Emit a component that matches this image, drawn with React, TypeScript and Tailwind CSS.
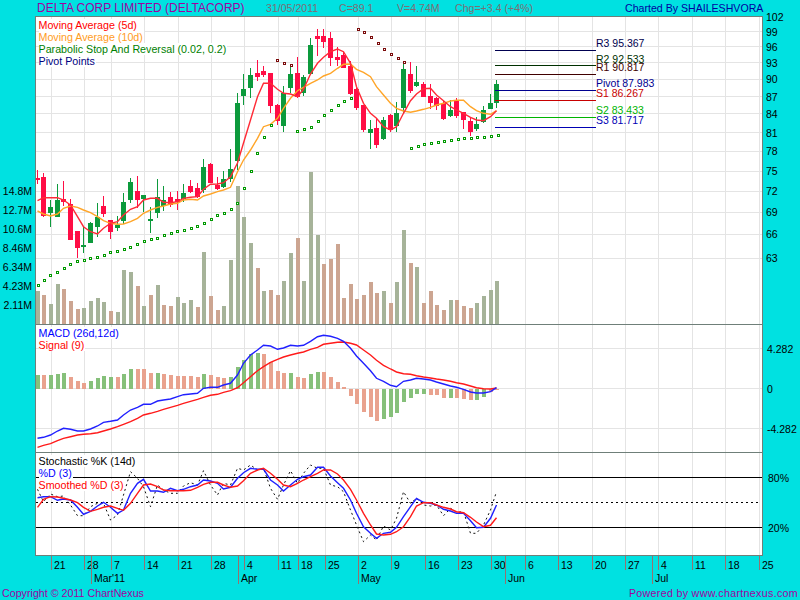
const ma5 = [200.7,197.7,197.7,197.7,200,205,216.7,226.7,231.7,234,228.3,223.3,221.7,215,209.3,206.7,200,198.3,198.3,202.3,202.7,201.7,198.3,197.3,196.7,189.3,184.3,184,182.7,176.7,163,143,120,96.7,83.3,83.3,89.3,93.3,94,96.7,89.3,74,63.3,57.3,51.7,49,51.7,63.3,86.7,103.3,113.3,118.3,126.7,130,126.7,113.3,100.7,94,88.7,88.3,95,100.7,106.7,110,113.3,117.3,120,120.7,116.7,110.7];
const ma10 = [211,214,216,214,208.3,206,207.3,210,212.7,216.7,220.7,223.3,224.3,224,221.7,218.3,213.3,210,207.3,206,204,203.3,200,199.3,200,196,194,191.7,190,187.3,171.7,160,150,138.3,126.7,124.3,118.3,108.3,98.3,90.7,87.3,83.3,80,76,73.3,68.3,64.3,64,69.3,72.3,76.7,86.7,95,103.3,108.3,111,112.3,111,109.3,107.3,105,103.3,101,100.3,100.3,106.7,110.7,113.3,114.3,110.7];

// wickTop, bodyTop, bodyBottom, wickBottom, colour
const candles: [number, number, number, number, string][] = [
  [170,178,180,184,"r"],[172.5,177,216,217,"r"],[200,207,213,227,"g"],[184,200,217,217,"g"],[181,199,202,206,"r"],
  [199,204,240,240,"r"],[231,231,248,258,"r"],[227,245,247,253,"g"],[222,223,243,243,"g"],[203,217,227,237,"g"],
  [196,206,214,217,"r"],[220,220,232,239,"r"],[216,225,228,231,"g"],[193,202,221,224,"g"],[178,182,200,203,"g"],
  [176,191,200,208,"r"],[195,195,199,212,"g"],[207,219,220,233,"g"],[179,197,213,218,"g"],[186,200,206,211,"g"],
  [192,197,205,207,"r"],[191,199,202,210,"r"],[184,193,199,202,"g"],[180,186,192,193,"r"],[183,188,197,198,"r"],
  [159,167,190,193,"g"],[163,164,183,183,"r"],[177,185,189,190,"r"],[171,179,187,188,"g"],[149,169,179,182,"g"],
  [93,103,161,170,"g"],[74,89,96,105,"g"],[68,75,88,98,"g"],[60,73,77,81,"r"],[66,71,75,77,"r"],
  [73,73,106,113,"r"],[104,105,121,125,"r"],[86,93,126,132,"g"],[65,74,88,93,"g"],[57,73,97,98,"r"],
  [75,77,93,96,"g"],[38,45,74,75,"g"],[29,36,39,56,"r"],[29,36,42,48,"r"],[32,38,58,66,"r"],
  [47,57,60,66,"r"],[52,55,68,68,"r"],[61,66,94,95,"r"],[88,89,108,110,"r"],[105,105,130,132,"r"],
  [120,129,133,149,"g"],[118,128,145,148,"r"],[117,120,139,140,"g"],[114,115,130,132,"r"],[102,113,126,132,"g"],
  [62,69,108,113,"g"],[62,74,91,93,"r"],[66,82,86,87,"g"],[82,84,97,97,"r"],[84,96,103,109,"r"],
  [97,98,106,110,"r"],[101,103,119,120,"r"],[100,110,116,117,"g"],[98,100,116,118,"r"],[112,112,120,129,"r"],
  [117,121,132,136,"r"],[117,124,129,131,"g"],[106,110,122,123,"g"],[94,103,109,109,"g"],[80,84,103,108,"g"],
];

const volumeTops = [363,375,402,342,357,393,417,414,393,384,396,423,426,300,306,348,408,375,345,405,408,381,399,390,411,246,378,420,408,270,48,141,219,294,363,360,375,333,249,204,333,6,195,282,267,222,384,342,387,375,336,369,363,399,336,180,279,291,399,363,405,420,390,390,408,414,399,378,360,333];
const volumeColors = "gpggpppggg" + "gpgggpgpgp" + "pgggpgppgg" + "gggpgppggp" + "gggppppppp" + "ppgpggpgpp" + "ppgpppgggg";

const histTops = [165,165,165,162,159,171,183,189,183,174,168,171,171,162,147,147,147,159,159,162,165,168,168,168,171,162,165,171,174,171,141,120,102,99,102,126,153,159,159,171,174,162,156,156,171,186,201,228,252,276,291,303,297,291,279,246,234,222,222,225,225,234,234,234,237,240,240,231,216,208];
const histColors = "gpgggpppgg" + "ggpggpppgp" + "pppppgpppg" + "ggggppppgp" + "pggppppppp" + "ppgggggggp" + "ppgpppggpp";

const macdLine = [355,352,345,333,325,328,333,333,327,318,307,304,300,285,270,262,253,253,243,240,237,230,224,222,220,205,202,202,195,190,165,130,105,90,76,78,88,84,76,78,76,64,50,46,49,55,64,85,108,130,152,175,184,196,200,184,180,175,177,180,186,192,198,202,208,216,219,219,215,203];
const signalLine = [382,376,371,362,355,350,345,343,341,338,333,327,320,313,305,295,285,280,274,268,262,256,250,244,238,232,226,223,217,212,203,188,170,152,140,127,118,111,105,100,96,88,82,73,70,67,66,70,75,90,105,121,136,147,156,161,163,167,171,174,177,180,184,188,192,198,203,206,207,204];

const stochK = [118,155,132,140,138,165,197,197,170,160,160,210,195,135,65,85,110,170,105,120,130,130,108,98,105,62,105,135,100,105,55,60,45,60,55,115,148,105,62,100,70,45,55,55,105,110,125,180,225,275,255,270,228,240,205,125,160,145,165,168,165,197,175,187,185,250,250,225,180,125];
const stochD = [143,140,140,151,147,150,172,193,184,168,157,172,190,180,130,100,88,123,123,127,115,122,118,110,105,90,93,100,117,112,85,68,55,58,57,90,105,123,105,88,80,75,52,52,78,98,115,150,190,230,250,265,250,247,232,200,170,145,157,160,165,178,183,190,190,212,233,232,205,165];
const stochSmooth = [172,148,140,141,145,150,158,172,184,178,172,168,175,181,160,130,105,102,110,120,122,122,122,121,112,103,97,97,105,112,108,92,70,60,55,70,88,105,110,100,90,80,70,60,60,72,90,118,150,190,225,252,255,253,245,230,200,168,158,158,165,172,177,185,188,202,216,230,226,203];

const sarDots: [number, number, string][] = [
  ...[[38,285.7],[44.3,280.3],[50.7,275.3],[57.3,272.3],[64.3,268.3],[70.3,264.3],[77.3,261],[84.3,260],[90.7,258.3],[97.3,257.3],[104.3,255.3],[110.3,252.3],[117.3,251.3],[124.3,249.3],[130.3,247.3],[137.3,244.3],[144.3,241.3],[151.3,239.3],[157.3,238.3],[164.3,235.3],[171.3,233.3],[177.3,231.3],[184.3,230.3],[191.3,228.3],[197.3,226.3],[204.3,223.3],[211.3,219.3],[217.3,215.3],[224.3,213.3],[231.7,209.3],[237.3,203.3],[244.3,188.3],[251.3,171.3],[257.3,153.3],[264.3,137.3],[271.3,125.3],[297.3,131.3],[304.3,129.3],[311.3,127],[318.3,121.3],[324.3,115.3],[331.3,110.3],[338.3,105.3],[344.3,101.3],[351.3,98.3],[411.3,148.3],[418.3,146.3],[424.3,144.3],[431.3,143.3],[438.3,142.3],[444.3,141.3],[451.3,140.3],[458.3,139.3],[464.3,138.3],[471,138],[477.3,137],[484.3,137],[491.3,136],[498.3,135]].map(([x, y]) => [x, y, "#009900"] as [number, number, string]),
  ...[[277.3,60.3],[284.3,63.3],[291.3,65.3],[358.3,29.3],[364.3,32.3],[371.3,37.3],[378.3,43.3],[384.3,49.3],[391.3,54.3],[398.3,58.3],[404.3,62.3]].map(([x, y]) => [x, y, "#7a0a0a"] as [number, number, string]),
];

const pivots = [
  { label: "R3 95.367", y: 50, text: 43.3, color: "#000050" },
  { label: "R2 92.533", y: 65, text: 58.7, color: "#003000" },
  { label: "R1 90.817", y: 74, text: 67.3, color: "#400000" },
  { label: "Pivot 87.983", y: 90, text: 83.3, color: "#000090" },
  { label: "S1 86.267", y: 100, text: 93.3, color: "#c80000" },
  { label: "S2 83.433", y: 117, text: 110.3, color: "#00b400" },
  { label: "S3 81.717", y: 127, text: 120.3, color: "#0000b4" },
];

const gridX = [51,84,111,144,178,211,244,278,298,325,358,391,425,458,491,525,558,592,625,658,692,725,759];

const dayTicks: [number, string][] = [[51,"21"],[84,"28"],[111,"7"],[144,"14"],[178,"21"],[211,"28"],[244,"4"],[278,"11"],[298,"18"],[325,"25"],[358,"2"],[391,"9"],[425,"16"],[458,"23"],[491,"30"],[525,"6"],[558,"13"],[592,"20"],[625,"27"],[658,"4"],[692,"11"],[725,"18"],[759,"25"]];
const monthTicks: [number, string][] = [[91,"Mar'11"],[238,"Apr"],[358,"May"],[505,"Jun"],[652,"Jul"]];

const volumeLabels: [string, number][] = [["14.8M",190.7],["12.7M",210],["10.6M",228.5],["8.46M",247.5],["6.34M",266.5],["4.23M",285.5],["2.11M",304.5]];
const priceLabels: [string, number][] = [["102",16.5],["99",31.5],["96",46.5],["93",62.5],["90",79],["87",96.5],["84",113.5],["81",132.5],["78",151],["75",171],["72",191],["69",212],["66",234],["63",258]];
const macdLabels: [string, number][] = [["4.282",348.5],["0",388.5],["-4.282",428.5]];
const stochLabels: [string, number][] = [["80%",477.5],["20%",527.5]];

const candleX = (i: number) => Math.floor(37.3 + 6.66 * i);
const macdY = (v: number) => 320 + v / 3;
const stochY = (v: number) => 450 + v / 3;
const toPoints = (ys: number[]) => ys.map((y, i) => `${candleX(i) + 0.5},${y.toFixed(1)}`).join(" ");

function Grid({ rows, top, bottom }: { rows: number[]; top: number; bottom: number }) {
  return (
    <g stroke="#e4e4e4" strokeWidth={1} shapeRendering="crispEdges">
      {gridX.map((x) => (
        <line key={x} x1={x + 0.5} x2={x + 0.5} y1={top} y2={bottom} />
      ))}
      {rows.map((y) => (
        <line key={y} x1={36} x2={762} y1={y + 0.5} y2={y + 0.5} />
      ))}
    </g>
  );
}

function Legend({ items, className }: { items: [string, string][]; className: string }) {
  return (
    <div className={`absolute left-[2.5px] flex flex-col items-start text-[10.7px] leading-3 ${className}`}>
      {items.map(([label, color]) => (
        <span key={label} className="bg-white pr-px" style={{ color }}>
          {label}
        </span>
      ))}
    </div>
  );
}

function ScaleLabels({ labels, className }: { labels: [string, number][]; className: string }) {
  return (
    <>
      {labels.map(([label, y]) => (
        <span
          key={label}
          className={`absolute -translate-y-1/2 text-[10.5px] leading-none text-black ${className}`}
          style={{ top: y - 16 }}
        >
          {label}
        </span>
      ))}
    </>
  );
}

export default function App() {
  return (
    <div className="flex h-[600px] w-[800px] flex-col overflow-hidden bg-[#00e1e1] font-['Liberation_Sans',sans-serif]">
      {/* Cabecera */}
      <div className="flex h-4 items-center pl-[37px] text-[10.6px] leading-none whitespace-nowrap">
        <span className="w-[229px] text-[12px] text-[#a000a0]">DELTA CORP LIMITED (DELTACORP)</span>
        <span className="w-[73px] text-[#7d6f74]">31/05/2011</span>
        <span className="w-[58px] text-[#7d6f74]">C=89.1</span>
        <span className="w-[58px] text-[#7d6f74]">V=4.74M</span>
        <span className="w-[170px] text-[#7d6f74]">Chg=+3.4 (+4%)</span>
        <span className="text-[#0000a0]">Charted By SHAILESHVORA</span>
      </div>

      <div className="flex h-[540px]">
        <div className="relative w-[35px] shrink-0">
          <ScaleLabels labels={volumeLabels} className="right-[3px]" />
        </div>

        <div className="flex w-[728px] shrink-0 flex-col border border-[#6f7f79] bg-white">
          {/* Precio y volumen */}
          <div className="relative h-[308px] shrink-0 border-b border-[#6f7f79]">
            <svg className="block" width={726} height={307} viewBox="36 17 726 307">
              <Grid rows={[31,46,62,79,96,113,132,151,171,191,212,234,258]} top={17} bottom={324} />
              {volumeTops.map((v, i) => (
                <rect
                  key={i}
                  x={candleX(i) - 1}
                  y={Math.round(170 + v / 3)}
                  width={4}
                  height={324 - Math.round(170 + v / 3)}
                  fill={volumeColors[i] === "g" ? "#a6b399" : "#cca591"}
                  shapeRendering="crispEdges"
                />
              ))}
              {candles.map(([wt, bt, bb, wb, c], i) => {
                const fill = c === "g" ? "#0c9a3c" : "#ff0d45";
                return (
                  <g key={i} fill={fill} shapeRendering="crispEdges">
                    <rect x={candleX(i)} y={wt} width={1} height={wb - wt} />
                    <rect x={candleX(i) - 2} y={bt} width={5} height={Math.max(bb - bt, 2)} />
                  </g>
                );
              })}
              <polyline points={toPoints(ma10)} fill="none" stroke="#ffa528" strokeWidth={1.4} />
              <polyline points={toPoints(ma5)} fill="none" stroke="#ff2a36" strokeWidth={1.4} />
              {sarDots.map(([x, y, c], i) => (
                <rect
                  key={i}
                  x={Math.floor(x) - 0.5}
                  y={Math.floor(y) - 0.5}
                  width={2}
                  height={2}
                  fill="#fff"
                  stroke={c}
                  strokeWidth={1}
                />
              ))}
              {pivots.map((p) => (
                <line
                  key={p.label}
                  x1={495}
                  x2={596}
                  y1={p.y + 0.5}
                  y2={p.y + 0.5}
                  stroke={p.color}
                  shapeRendering="crispEdges"
                />
              ))}
            </svg>
            <Legend
              className="top-[2px]"
              items={[
                ["Moving Average (5d)", "#ff0000"],
                ["Moving Average (10d)", "#ff9c1e"],
                ["Parabolic Stop And Reversal (0.02, 0.2)", "#008000"],
                ["Pivot Points", "#000080"],
              ]}
            />
            {pivots.map((p) => (
              <span
                key={p.label}
                className="absolute left-[560px] -translate-y-1/2 text-[10.5px] leading-none whitespace-nowrap"
                style={{ top: p.text - 17, color: p.color }}
              >
                {p.label}
              </span>
            ))}
          </div>

          {/* MACD */}
          <div className="relative h-[128px] shrink-0 border-b border-[#6f7f79]">
            <svg className="block" width={726} height={127} viewBox="36 325 726 127">
              <Grid rows={[348,388,428]} top={325} bottom={452} />
              {histTops.map((v, i) => {
                const y = macdY(v);
                const zero = 389;
                return (
                  <rect
                    key={i}
                    x={candleX(i) - 1}
                    y={Math.round(Math.min(y, zero))}
                    width={4}
                    height={Math.max(Math.round(Math.abs(y - zero)), 1)}
                    fill={histColors[i] === "g" ? "#86c07a" : "#e9a28e"}
                    shapeRendering="crispEdges"
                  />
                );
              })}
              <polyline points={toPoints(signalLine.map(macdY))} fill="none" stroke="#ff1a1a" strokeWidth={1.4} />
              <polyline points={toPoints(macdLine.map(macdY))} fill="none" stroke="#2020ff" strokeWidth={1.4} />
            </svg>
            <Legend
              className="top-[2px]"
              items={[
                ["MACD (26d,12d)", "#0000ff"],
                ["Signal (9)", "#ff0000"],
              ]}
            />
          </div>

          {/* Estocástico */}
          <div className="relative flex-1">
            <svg className="block" width={726} height={102} viewBox="36 453 726 102">
              <Grid rows={[]} top={453} bottom={555} />
              <g shapeRendering="crispEdges">
                <line x1={36} x2={762} y1={477.5} y2={477.5} stroke="#000" />
                <line x1={36} x2={762} y1={527.5} y2={527.5} stroke="#000" />
                <line x1={36} x2={758} y1={502.5} y2={502.5} stroke="#000" strokeDasharray="2 3" />
              </g>
              <polyline points={toPoints(stochK.map(stochY))} fill="none" stroke="#111" strokeWidth={1} strokeDasharray="2 3" />
              <polyline points={toPoints(stochD.map(stochY))} fill="none" stroke="#2020ff" strokeWidth={1.4} />
              <polyline points={toPoints(stochSmooth.map(stochY))} fill="none" stroke="#ff1a1a" strokeWidth={1.4} />
            </svg>
            <Legend
              className="top-[2px]"
              items={[
                ["Stochastic %K (14d)", "#000000"],
                ["%D (3)", "#0000ff"],
                ["Smoothed %D (3)", "#ff0000"],
              ]}
            />
          </div>
        </div>

        <div className="relative flex-1">
          <ScaleLabels labels={priceLabels} className="left-[3px]" />
          <ScaleLabels labels={macdLabels} className="left-[4px]" />
          <ScaleLabels labels={stochLabels} className="left-[5px]" />
        </div>
      </div>

      {/* Eje de fechas */}
      <div className="relative h-7 shrink-0 text-[10.5px] leading-none text-black">
        {dayTicks.map(([x, label]) => (
          <div key={`${x}-${label}`} className="absolute top-0 flex h-[14px] border-l border-[#97716f] pl-0.5" style={{ left: x }}>
            <span className="self-end">{label}</span>
          </div>
        ))}
        {monthTicks.map(([x, label]) => (
          <div key={label} className="absolute top-0 flex h-7 border-l border-[#97716f] pl-0.5" style={{ left: x }}>
            <span className="self-end pb-px">{label}</span>
          </div>
        ))}
      </div>

      {/* Pie */}
      <div className="flex flex-1 items-center justify-between px-0.5 pt-[3px] text-[10.7px] leading-none text-[#a000a0]">
        <span>Copyright © 2011 ChartNexus</span>
        <span className="tracking-[0.3px]">Powered by www.chartnexus.com</span>
      </div>
    </div>
  );
}
